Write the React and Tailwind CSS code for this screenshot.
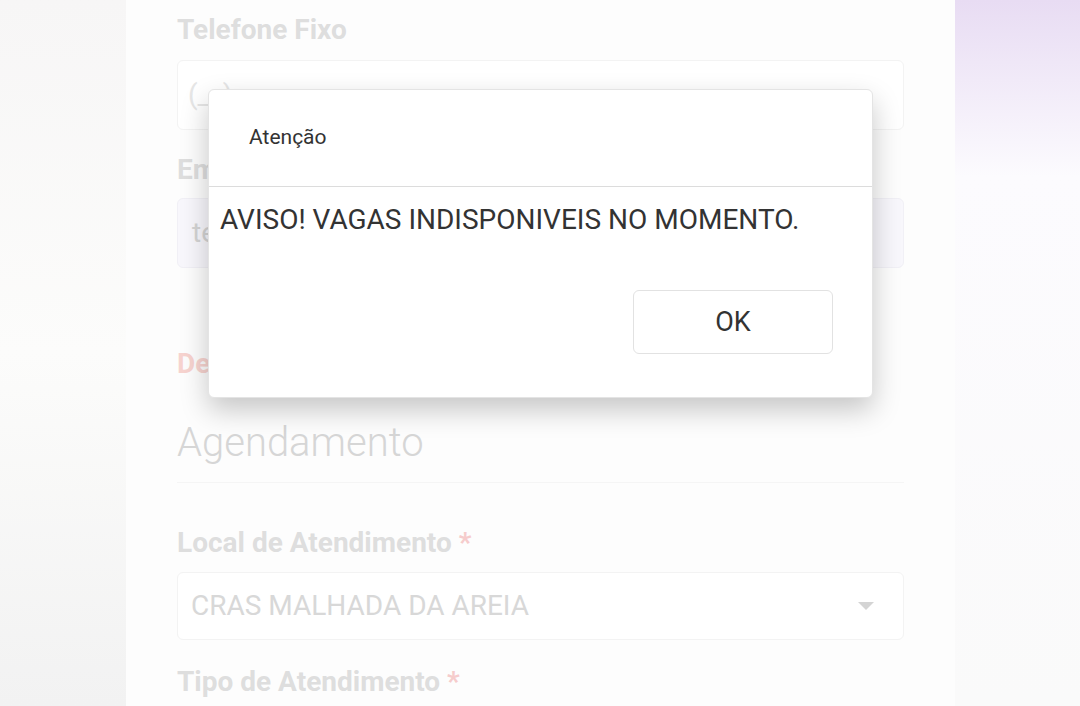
const Label = ({ children, required }) => (
  <div className="text-[28px] font-bold leading-none text-[#dedede]">
    {children}
    {required && <span className="text-[#f6cccc]"> *</span>}
  </div>
);

const App = () => {
  return (
    <div className="relative flex h-[706px] w-[1080px] overflow-hidden font-['Roboto',sans-serif]">
      {/* side strips */}
      <div className="w-[126px] shrink-0 bg-gradient-to-b from-[#f7f6f6] via-[#fcfcfb] to-[#f2f2f2]" />

      {/* faded form behind the dialog */}
      <div className="flex w-[829px] shrink-0 flex-col bg-[#fdfdfd] px-[51px]">
        <div className="mt-[16px]">
          <Label>Telefone Fixo</Label>
        </div>
        <div className="mt-[16px] flex h-[70px] shrink-0 items-center rounded-md border border-[#f3f3f3] bg-white px-[10px] text-[28px] text-[#e6e6e6]">
          (__) ____-____
        </div>

        <div className="mt-[26px]">
          <Label>Email</Label>
        </div>
        <div className="mt-[14px] flex h-[70px] shrink-0 items-center rounded-md border border-[#f1f0f6] bg-[#f8f7fc] px-[14px] text-[28px] text-[#d4d4d4]">
          teste@email.com
        </div>

        <div className="mt-[82px] text-[28px] font-bold leading-none text-[#f7d3cf]">
          Dependentes
        </div>

        <div className="mt-[45px] text-[40px] font-light leading-none text-[#d6d6d6]">
          Agendamento
        </div>
        <div className="mt-[19px] h-px shrink-0 bg-[#f5f5f5]" />

        <div className="mt-[46px]">
          <Label required>Local de Atendimento</Label>
        </div>
        <div className="mt-[15px] flex h-[68px] shrink-0 items-center justify-between rounded-md border border-[#f3f3f3] bg-white pl-[13px] pr-[28px] text-[28px] text-[#d8d8d8]">
          <span>CRAS MALHADA DA AREIA</span>
          <svg width="18" height="10" viewBox="0 0 18 10">
            <path d="M1 1h16L9 9z" fill="#d4d4d4" />
          </svg>
        </div>

        <div className="mt-[28px]">
          <Label required>Tipo de Atendimento</Label>
        </div>
      </div>

      <div className="flex-1 bg-gradient-to-b from-[#e8dcf3] via-[#fcfbfe] via-25% to-[#fafafa]" />

      {/* alert dialog */}
      <div className="absolute left-[208px] top-[89px] flex h-[309px] w-[665px] flex-col rounded-md border border-[#e4e4e4] bg-white shadow-[0_12px_28px_rgba(0,0,0,0.22)]">
        <div className="flex h-[97px] shrink-0 items-center border-b border-[#dcdcdc] pl-[40px] text-[21px] text-[#333]">
          Atenção
        </div>
        <div className="pl-[11px] pt-[15px] text-[28px] leading-tight text-[#333]">
          AVISO! VAGAS INDISPONIVEIS NO MOMENTO.
        </div>
        <div className="mt-auto flex justify-end pb-[43px] pr-[39px]">
          <button className="flex h-[64px] w-[200px] items-center justify-center rounded-md border border-[#e2e2e2] bg-white text-[27px] text-[#333]">
            OK
          </button>
        </div>
      </div>
    </div>
  );
};

export default App;
